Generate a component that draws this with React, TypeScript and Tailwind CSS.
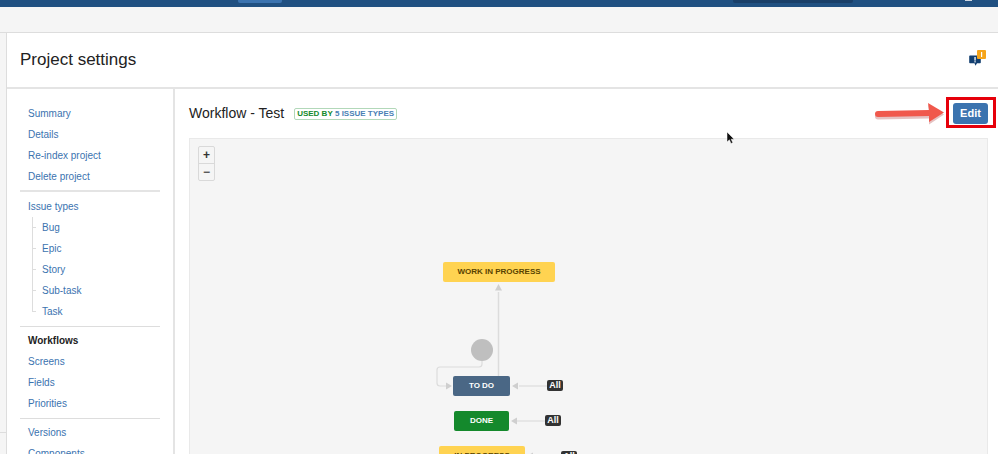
const groups = [
  [{ label: "Summary" }, { label: "Details" }, { label: "Re-index project" }, { label: "Delete project" }],
  [
    { label: "Issue types" },
    { label: "Bug", sub: true },
    { label: "Epic", sub: true },
    { label: "Story", sub: true },
    { label: "Sub-task", sub: true },
    { label: "Task", sub: true, last: true },
  ],
  [{ label: "Workflows", active: true }, { label: "Screens" }, { label: "Fields" }, { label: "Priorities" }],
  [{ label: "Versions" }, { label: "Components" }],
];

type Item = { label: string; sub?: boolean; last?: boolean; active?: boolean };

function NavRow({ item }: { item: Item }) {
  if (item.sub) {
    return (
      <div className="relative flex h-[21px] items-center pl-[14px]">
        <span className={`absolute left-[4px] top-0 w-px bg-[#dddddd] ${item.last ? "h-[11px]" : "h-[21px]"}`} />
        <span className="absolute left-[4px] top-[10px] h-px w-[4px] bg-[#dddddd]" />
        <span className="text-[#3b73af]">{item.label}</span>
      </div>
    );
  }
  return (
    <div className={`flex h-[21px] items-center ${item.active ? "font-bold text-[#222222]" : "text-[#3b73af]"}`}>
      {item.label}
    </div>
  );
}

function Sidebar() {
  return (
    <div className="w-[168px] shrink-0 border-r-2 border-[#e4e4e4] pl-[13px] pr-[13px] pt-[14px] text-[10px]">
      {groups.map((group, i) => (
        <div
          key={i}
          className={
            i === 0
              ? "mb-[4px] border-b-2 border-[#e4e4e4] pb-[3px]"
              : i < groups.length - 1
                ? "mb-[3px] border-b border-[#dddddd] pb-[4px]"
                : ""
          }
        >
          {group.map((item) => (
            <div key={item.label} className="pl-[8px]">
              <NavRow item={item} />
            </div>
          ))}
        </div>
      ))}
    </div>
  );
}

function WorkflowNode({ label, className }: { label: string; className: string }) {
  return (
    <div className={`absolute flex h-[20px] items-center justify-center rounded-[2px] text-[8px] font-bold ${className}`}>
      {label}
    </div>
  );
}

function AllBadge({ className }: { className: string }) {
  return (
    <div className={`absolute flex h-[11px] w-[16px] items-center justify-center rounded-[2px] bg-[#333333] text-[9px] font-bold text-white ${className}`}>
      All
    </div>
  );
}

function Diagram() {
  return (
    <div className="relative mt-[14px] h-[330px] overflow-hidden border border-[#e9e9e9] bg-[#f5f5f5]">
      {/* canvas starts at page 189,138 so the viewBox uses page coords */}
      <svg className="absolute left-0 top-0" width="800" height="330" viewBox="190 139 800 330" fill="none">
        <path d="M498.5 376V292" stroke="#dcdcdc" strokeWidth="1.5" />
        <path d="M498.5 284l-3.5 6.5h7z" fill="#cfcfcf" />
        <path d="M482 361v3a3 3 0 0 1-3 3h-39a3 3 0 0 0-3 3v13a3 3 0 0 0 3 3h8" stroke="#dcdcdc" strokeWidth="1.2" />
        <path d="M452 386l-6-3.5v7z" fill="#cfcfcf" />
        <path d="M547 386h-28" stroke="#dcdcdc" strokeWidth="1.2" />
        <path d="M512 386l6-3.5v7z" fill="#cfcfcf" />
        <path d="M545 421h-28" stroke="#dcdcdc" strokeWidth="1.2" />
        <path d="M511 421l6-3.5v7z" fill="#cfcfcf" />
        <path d="M561 456h-28" stroke="#dcdcdc" strokeWidth="1.2" />
        <path d="M527 456l6-3.5v7z" fill="#cfcfcf" />
        <circle cx="482" cy="350" r="11" fill="#bfbfbf" />
      </svg>

      <div className="absolute left-[8px] top-[7px] w-[17px] rounded-[2px] border border-[#d9d9d9] bg-[#f5f5f5] text-[#333333]">
        <div className="flex h-[17px] items-center justify-center border-b border-[#d9d9d9] text-[12px] font-bold leading-none">+</div>
        <div className="flex h-[16px] items-center justify-center text-[12px] font-bold leading-none text-[#555555]">−</div>
      </div>

      <WorkflowNode label="WORK IN PROGRESS" className="left-[253px] top-[123px] w-[112px] bg-[#ffd351] text-[#594300]" />
      <WorkflowNode label="TO DO" className="left-[263px] top-[237px] w-[57px] bg-[#4a6785] text-white" />
      <WorkflowNode label="DONE" className="left-[264px] top-[272px] w-[55px] bg-[#14892c] text-white" />
      <WorkflowNode label="IN PROGRESS" className="left-[249px] top-[307px] w-[86px] bg-[#ffd351] text-[#594300]" />
      <AllBadge className="left-[357px] top-[241px]" />
      <AllBadge className="left-[355px] top-[276px]" />
      <AllBadge className="left-[371px] top-[312px]" />
    </div>
  );
}

export default function App() {
  return (
    <div className="relative h-[454px] w-[998px] overflow-hidden bg-[#f5f5f5] font-['Liberation_Sans',Arial,sans-serif]">
      {/* top nav, only its bottom edge is in frame */}
      <div className="relative h-[7px] bg-[#205081]">
        <div className="absolute left-[238px] top-0 h-[3px] w-[44px] rounded-b-[2px] bg-[#3b73af]" />
        <div className="absolute left-[733px] top-0 h-[3px] w-[120px] rounded-b-[2px] bg-[#1a3f68]" />
        <div className="absolute left-[965px] top-0 h-[1px] w-[7px] bg-[#cfd8e3]" />
      </div>
      <div className="h-[26px] border-b border-[#dddddd]" />

      <div className="flex">
        <div className="w-[6px] shrink-0">
          <div className="mt-[399px] border-t border-[#dddddd]" />
        </div>
        <div className="min-w-0 flex-1 border-l border-[#dddddd] bg-white">
          <div className="flex h-[56px] items-center justify-between border-b-2 border-[#e4e4e4] pl-[13px] pr-[12px]">
            <h1 className="text-[17px] text-[#222222]">Project settings</h1>
            <svg width="17" height="17" viewBox="0 0 17 17" className="mt-[-4px]">
              <path d="M1 5.5h10a.8.8 0 0 1 .8.8v6.2a.8.8 0 0 1-.8.8H8l-1.5 2.5L5.5 13.3H1a.8.8 0 0 1-.8-.8V6.3A.8.8 0 0 1 1 5.5z" fill="#123f70" />
              <rect x="5.4" y="7" width="1.3" height="3.6" fill="#ffffff" />
              <rect x="5.4" y="11.2" width="1.3" height="1.2" fill="#ffffff" />
              <rect x="8" y="0" width="9" height="9" rx="1" fill="#f6a51a" />
              <rect x="12" y="2" width="1.2" height="5" fill="#ffffff" />
            </svg>
          </div>

          <div className="flex">
            <Sidebar />
            <div className="min-w-0 flex-1 pl-[14px] pr-[10px] pt-[14px]">
              <div className="flex h-[21px] items-center justify-between">
                <div className="flex items-center gap-[10px]">
                  <h2 className="text-[14px] text-[#222222]">Workflow - Test</h2>
                  <span className="flex h-[12px] items-center rounded-[2px] border border-[#b2d8b9] px-[2px] text-[8px] font-bold">
                    <span className="text-[#14892c]">USED BY&nbsp;</span>
                    <span className="text-[#4a7fb5]">5 ISSUE TYPES</span>
                  </span>
                </div>
                <button className="flex h-[21px] w-[35px] items-center justify-center rounded-[3px] bg-[#3b73af] text-[11px] font-bold text-white">
                  Edit
                </button>
              </div>
              <Diagram />
            </div>
          </div>
        </div>
      </div>

      {/* screenshot annotations */}
      <div className="absolute left-[946px] top-[97px] h-[31px] w-[50px] border-[3px] border-[#e6000a]" />
      <svg className="absolute left-[872px] top-[100px]" width="74" height="30" viewBox="0 0 74 30">
        <path d="M6 12L57 11L56 3.5L72 13L57 23L57 17L6 18a3 3 0 0 1 0-6z" fill="#a33" opacity="0.3" transform="translate(0 1.5)" />
        <path d="M6 11L57 10L56 3L72 12.5L57 22L57 16L6 17a3 3 0 0 1 0-6z" fill="#f0584c" />
      </svg>
      <svg className="absolute left-[726px] top-[131px]" width="9" height="14" viewBox="0 0 9 14">
        <path d="M1 1v10l2.4-2.2L5 12.5l1.8-.8-1.6-3.5h3z" fill="#111111" stroke="#ffffff" strokeWidth="0.5" />
      </svg>
    </div>
  );
}
